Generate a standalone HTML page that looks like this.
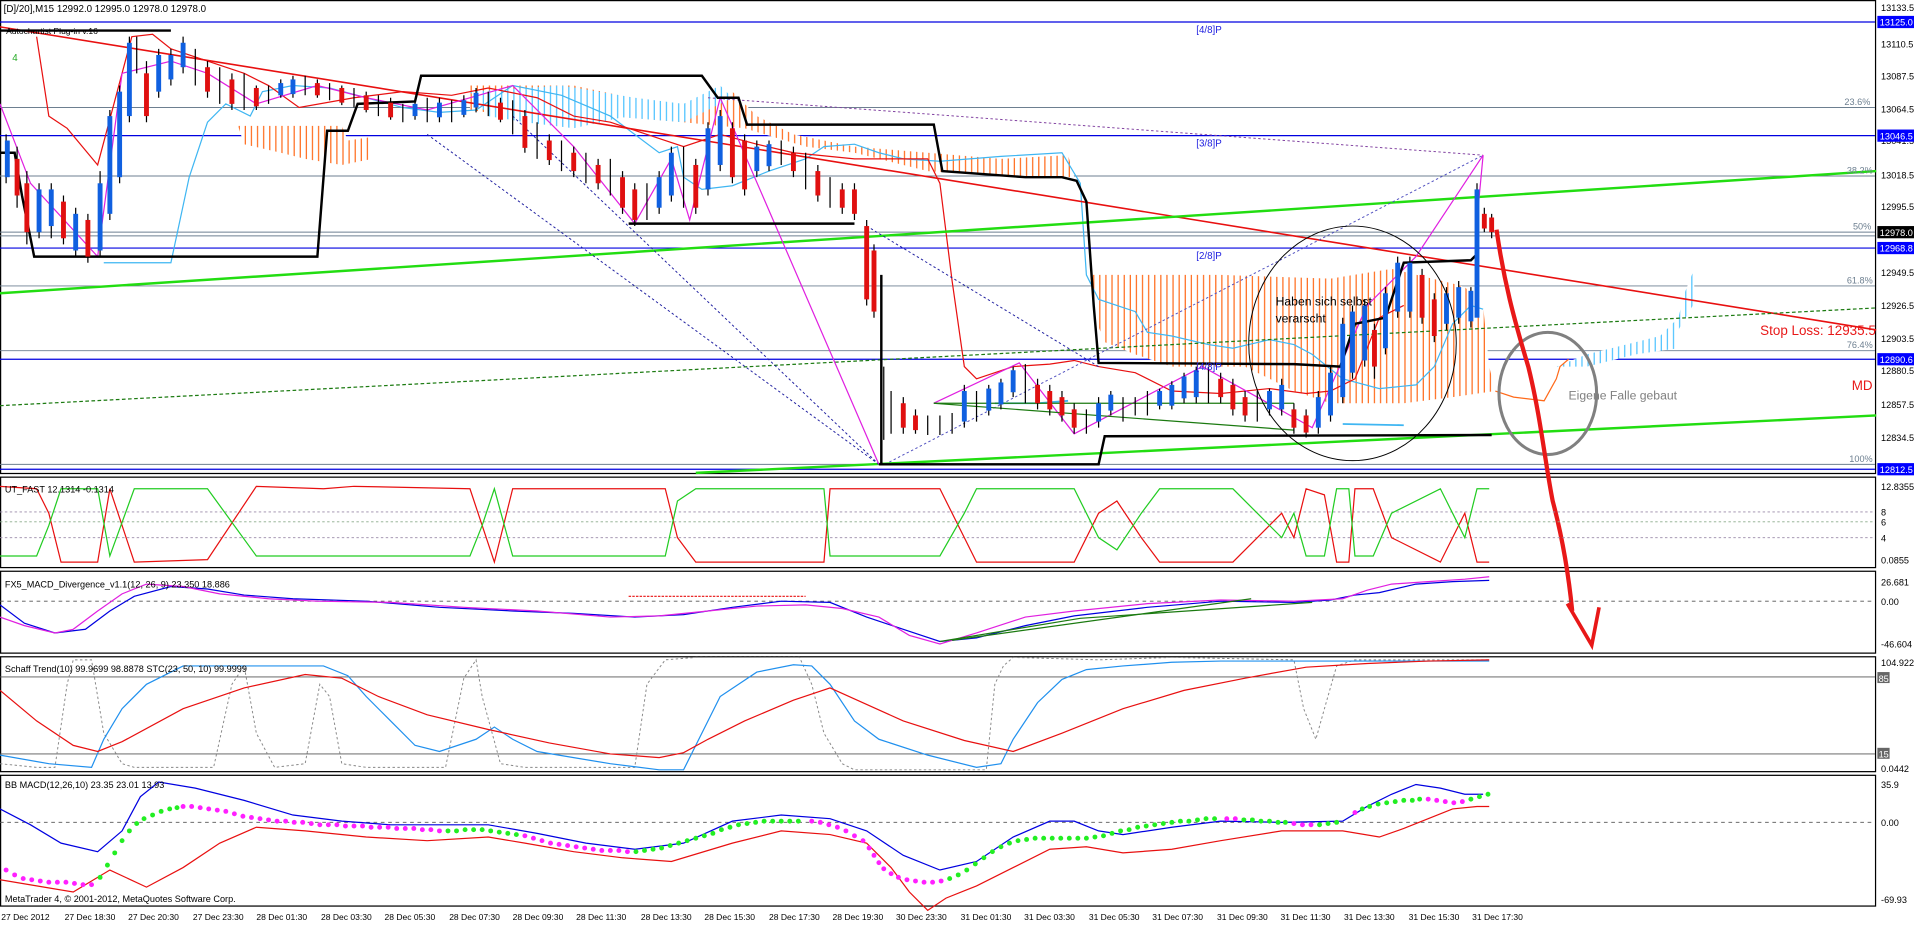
<!DOCTYPE html>
<html><head><meta charset="utf-8"><style>
html,body{margin:0;padding:0;background:#fff;overflow:hidden}
svg{display:block}
text{font-family:"Liberation Sans",sans-serif}
</style></head><body>
<svg width="1914" height="925" viewBox="0 0 1568 757" preserveAspectRatio="none" xmlns="http://www.w3.org/2000/svg">
<defs>
<pattern id="ho" width="5" height="10" patternUnits="userSpaceOnUse"><rect width="5" height="10" fill="#fff"/><line x1="1" y1="0" x2="1" y2="10" stroke="#ff6a1a" stroke-width="1"/></pattern>
<pattern id="hb" width="5" height="10" patternUnits="userSpaceOnUse"><rect width="5" height="10" fill="#fff"/><line x1="1" y1="0" x2="1" y2="10" stroke="#4cc2ff" stroke-width="1"/></pattern>
</defs>
<rect width="1568" height="757" fill="#fff"/>
<!-- panel borders -->
<g fill="none" stroke="#000" stroke-width="1">
<rect x="0.5" y="0.5" width="1536" height="387"/>
<rect x="0.5" y="390.5" width="1536" height="74"/>
<rect x="0.5" y="467.5" width="1536" height="67"/>
<rect x="0.5" y="537.5" width="1536" height="94"/>
<rect x="0.5" y="634.5" width="1536" height="107"/>
</g>
<!-- horizontal levels -->
<g stroke="#6d7f90" stroke-width="0.8">
<line x1="0" y1="88" x2="1536" y2="88"/><line x1="0" y1="144" x2="1536" y2="144"/>
<line x1="0" y1="190" x2="1536" y2="190"/><line x1="0" y1="193" x2="1536" y2="193"/><line x1="0" y1="234" x2="1536" y2="234"/>
<line x1="0" y1="287" x2="1536" y2="287"/><line x1="0" y1="380" x2="1536" y2="380"/>
</g>
<g stroke="#0000e0" stroke-width="1">
<line x1="0" y1="18" x2="1536" y2="18"/><line x1="0" y1="111" x2="1536" y2="111"/>
<line x1="0" y1="203" x2="1536" y2="203"/><line x1="0" y1="294" x2="1536" y2="294"/><line x1="0" y1="384" x2="1536" y2="384"/>
</g>
<!-- ichimoku clouds -->
<path d="M195,103 L280,103 L285,115 L305,112 L305,130 L280,135 L250,130 L230,125 L200,118Z" fill="url(#ho)"/>
<path d="M385,70 L470,70 L540,85 L580,90 L600,75 L620,95 L650,110 L700,120 L760,125 L820,130 L875,127 L880,145 L840,145 L760,140 L700,125 L660,120 L610,105 L560,100 L500,95 L450,102 L420,95 L385,90Z" fill="url(#ho)"/>
<path d="M385,75 L460,70 L520,80 L560,85 L590,70 L600,80 L560,100 L510,96 L470,105 L430,100 L400,95Z" fill="url(#hb)"/>
<path d="M895,225 L1000,225 L1090,228 L1140,220 L1190,232 L1200,235 L1215,250 L1220,300 L1225,320 L1190,325 L1150,330 L1120,330 L1090,330 L1060,320 L1020,300 L960,300 L930,290 L905,280 L897,260Z" fill="url(#ho)"/>
<path d="M1275,300 L1300,290 L1320,285 L1340,280 L1360,275 L1375,260 L1380,240 L1388,220 L1388,248 L1375,270 L1375,285 L1340,290 L1300,300Z" fill="url(#hb)"/>
<path d="M1225,320 L1240,325 L1265,328 L1275,310 L1278,300 L1285,294" fill="none" stroke="#ff6a1a"/>
<!-- lightblue kijun/chikou -->
<polyline fill="none" stroke="#3fb6f2" stroke-width="1" points="85,215 140,215 155,145 170,100 185,85 205,95 215,75 240,70 270,72 300,80 330,88 360,92 390,90 420,70 460,78 500,95 540,125 555,120 560,145 575,155 600,152 630,140 660,130 675,120 700,118 720,125 740,130 770,132 820,128 870,125 885,150 890,225 900,245 930,255 940,272 960,275 990,282 1010,285 1040,278 1060,282 1075,290 1100,310 1130,318 1160,315 1175,300 1190,265 1205,250 1215,253"/>
<polyline fill="none" stroke="#3fb6f2" stroke-width="1.5" points="815,330 850,330 875,328"/>
<polyline fill="none" stroke="#3fb6f2" stroke-width="1.5" points="1100,347 1150,348"/>
<!-- red psar/tenkan -->
<polyline fill="none" stroke="#e81010" stroke-width="1" points="30,30 40,95 55,105 80,135 100,60 108,30 125,28 140,40 170,50 200,60 220,70 245,88 290,80 330,75 370,78 400,72 440,80 470,95 500,100 530,110 560,120 590,110 620,118 650,125 700,130 760,130 770,150 780,230 790,300 800,310 830,300 860,298 880,295 900,300 930,305 960,320 1000,322 1040,318 1070,322 1090,320 1110,310 1130,260 1150,250"/>
<!-- big trend lines -->
<line x1="0" y1="22" x2="1537" y2="270" stroke="#e81010" stroke-width="1.3"/>
<line x1="0" y1="240" x2="1537" y2="140" stroke="#22dd11" stroke-width="2"/>
<line x1="0" y1="332" x2="1537" y2="252" stroke="#1b7a10" stroke-width="1" stroke-dasharray="3,2"/>
<line x1="570" y1="387" x2="1537" y2="340" stroke="#22dd11" stroke-width="2"/>
<line x1="725" y1="380" x2="1215" y2="127" stroke="#5050c0" stroke-width="0.8" stroke-dasharray="2,2"/>
<line x1="580" y1="80" x2="1215" y2="127" stroke="#8040a0" stroke-width="0.8" stroke-dasharray="2,2"/>
<line x1="350" y1="110" x2="720" y2="380" stroke="#2020a0" stroke-width="0.8" stroke-dasharray="2,2"/>
<line x1="420" y1="95" x2="720" y2="380" stroke="#2020a0" stroke-width="0.8" stroke-dasharray="2,2"/>
<line x1="710" y1="185" x2="900" y2="300" stroke="#2020a0" stroke-width="0.8" stroke-dasharray="2,2"/>
<polyline fill="none" stroke="#e020e0" stroke-width="1" points="0,85 25,150 80,210 100,60 140,50 170,60 210,85 260,70 300,80 350,90 420,70 470,120 520,183 550,130 565,180 590,80 720,380"/>
<polyline fill="none" stroke="#e020e0" stroke-width="1" points="765,330 835,297 880,355 985,300 1075,350 1120,250 1160,210 1215,127 1210,180"/>
<line x1="765" y1="330" x2="1060" y2="352" stroke="#1b7a10" stroke-width="1"/>
<line x1="765" y1="330" x2="1060" y2="330" stroke="#1b7a10" stroke-width="1"/>
<!-- black step lines -->
<polyline fill="none" stroke="#000" stroke-width="2" points="0,125 12,125 18,160 28,210 260,210 268,107 285,107 293,85 340,83 345,62 575,62 588,80 605,80 612,102 765,102 772,140 840,145 870,145 882,148 890,165 896,250 900,297 1060,298 1098,300 1110,265 1135,260 1150,215 1205,213 1210,208"/>
<polyline fill="none" stroke="#000" stroke-width="2" points="0,25 140,25"/>
<polyline fill="none" stroke="#000" stroke-width="2" points="515,183 700,183"/>
<polyline fill="none" stroke="#000" stroke-width="2" points="720,380 900,380 905,357 1222,356"/>
<line x1="722" y1="225" x2="722" y2="380" stroke="#000" stroke-width="2"/>
<!-- candles -->
<g id="candles" stroke-width="1">
<g stroke="#000">
<path d="M5,110V150M14,120V170M22,140V200M32,150V195M42,150V195M52,160V200M62,170V210M72,175V215M82,140V210M90,90V180M98,70V150M106,30V100M112,30V60M120,50V100M130,40V80M140,40V70M150,30V60M160,40V70M170,50V80M180,55V85M190,60V90M200,60V90M210,70V90M220,70V85M230,65V80M240,62V80M250,62V78M260,65V80M270,68V82M280,70V86M290,72V88M300,75V92M310,78V95M320,80V98M330,85V100M340,82V98M350,80V100M360,80V100M370,82V100M380,78V96M390,72V92M400,75V95M410,80V100M420,82V110M430,90V125M440,100V130M450,110V135M460,115V140M470,120V145M480,125V150M490,130V155M500,130V160M510,140V175M520,150V185M530,150V180M540,140V175M550,120V165M560,120V170M570,130V175M580,100V160M590,90V140M600,100V150M610,110V160M620,115V145M630,115V140M640,115V135M650,120V145M660,125V155M670,135V165M680,145V170M690,150V175M700,150V180M710,180V250M716,200V260M724,300V360M730,320V355M740,325V355M750,335V355M760,340V356M770,340V356M780,338V355M790,315V350M800,320V345M810,315V340M820,310V335M830,300V325M840,298V330M850,310V335M860,315V340M870,320V345M880,330V355M890,335V355M900,325V350M910,320V340M920,325V345M930,325V340M940,320V340M950,318V335M960,312V335M970,305V330M980,300V330M990,300V330M1000,305V330M1010,310V340M1020,320V345M1030,320V345M1040,318V340M1050,310V340M1060,330V355M1070,335V358M1080,320V355M1090,300V345M1100,260V330M1108,250V310M1118,245V300M1126,265V310M1135,235V290M1145,210V260M1155,210V260M1165,220V265M1175,240V280M1185,235V270M1195,230V265M1205,235V268M1210,150V210M1216,170V190M1222,175V195"/>
</g>
<g fill="#e01010" stroke="none">
<rect x="12" y="130" width="4" height="30"/><rect x="20" y="150" width="4" height="40"/><rect x="50" y="165" width="4" height="30"/><rect x="70" y="180" width="4" height="30"/><rect x="118" y="60" width="4" height="35"/><rect x="168" y="55" width="4" height="20"/><rect x="188" y="65" width="4" height="20"/><rect x="208" y="72" width="4" height="15"/><rect x="258" y="68" width="4" height="10"/><rect x="278" y="72" width="4" height="12"/><rect x="298" y="78" width="4" height="12"/><rect x="318" y="84" width="4" height="12"/><rect x="408" y="84" width="4" height="14"/><rect x="428" y="95" width="4" height="26"/><rect x="448" y="115" width="4" height="16"/><rect x="468" y="125" width="4" height="15"/><rect x="488" y="135" width="4" height="15"/><rect x="508" y="145" width="4" height="25"/><rect x="518" y="155" width="4" height="25"/><rect x="568" y="135" width="4" height="35"/><rect x="598" y="105" width="4" height="40"/><rect x="608" y="115" width="4" height="40"/><rect x="648" y="125" width="4" height="15"/><rect x="668" y="140" width="4" height="20"/><rect x="688" y="155" width="4" height="15"/><rect x="698" y="155" width="4" height="20"/><rect x="708" y="185" width="4" height="60"/><rect x="714" y="205" width="4" height="50"/><rect x="738" y="330" width="4" height="20"/><rect x="748" y="340" width="4" height="12"/><rect x="848" y="315" width="4" height="15"/><rect x="858" y="320" width="4" height="15"/><rect x="868" y="325" width="4" height="15"/><rect x="878" y="335" width="4" height="15"/><rect x="998" y="310" width="4" height="15"/><rect x="1008" y="315" width="4" height="20"/><rect x="1018" y="325" width="4" height="15"/><rect x="1058" y="335" width="4" height="15"/><rect x="1068" y="340" width="4" height="14"/><rect x="1124" y="270" width="4" height="30"/><rect x="1163" y="225" width="4" height="35"/><rect x="1173" y="245" width="4" height="30"/><rect x="1214" y="175" width="4" height="12"/><rect x="1220" y="178" width="4" height="12"/>
</g>
<g fill="#1060e0" stroke="none">
<rect x="4" y="115" width="4" height="30"/><rect x="30" y="155" width="4" height="35"/><rect x="40" y="155" width="4" height="30"/><rect x="60" y="175" width="4" height="30"/><rect x="80" y="150" width="4" height="55"/><rect x="88" y="95" width="4" height="80"/><rect x="96" y="75" width="4" height="70"/><rect x="104" y="35" width="4" height="60"/><rect x="128" y="45" width="4" height="30"/><rect x="138" y="45" width="4" height="20"/><rect x="148" y="35" width="4" height="20"/><rect x="228" y="68" width="4" height="10"/><rect x="238" y="65" width="4" height="12"/><rect x="338" y="85" width="4" height="10"/><rect x="358" y="84" width="4" height="12"/><rect x="378" y="82" width="4" height="12"/><rect x="388" y="76" width="4" height="12"/><rect x="538" y="145" width="4" height="25"/><rect x="548" y="125" width="4" height="35"/><rect x="578" y="105" width="4" height="50"/><rect x="588" y="95" width="4" height="40"/><rect x="618" y="120" width="4" height="20"/><rect x="628" y="118" width="4" height="18"/><rect x="788" y="320" width="4" height="25"/><rect x="808" y="318" width="4" height="18"/><rect x="818" y="313" width="4" height="18"/><rect x="828" y="303" width="4" height="18"/><rect x="898" y="330" width="4" height="15"/><rect x="908" y="323" width="4" height="13"/><rect x="948" y="320" width="4" height="12"/><rect x="958" y="315" width="4" height="17"/><rect x="968" y="308" width="4" height="18"/><rect x="978" y="303" width="4" height="22"/><rect x="1038" y="320" width="4" height="15"/><rect x="1048" y="315" width="4" height="20"/><rect x="1078" y="325" width="4" height="25"/><rect x="1088" y="305" width="4" height="35"/><rect x="1098" y="265" width="4" height="60"/><rect x="1106" y="255" width="4" height="50"/><rect x="1116" y="250" width="4" height="45"/><rect x="1133" y="240" width="4" height="45"/><rect x="1143" y="215" width="4" height="40"/><rect x="1153" y="215" width="4" height="40"/><rect x="1183" y="240" width="4" height="25"/><rect x="1193" y="235" width="4" height="25"/><rect x="1203" y="238" width="4" height="25"/><rect x="1208" y="155" width="4" height="105"/>
</g>
</g>
<!-- ellipses -->
<ellipse cx="1108" cy="281" rx="85" ry="96" fill="none" stroke="#000" stroke-width="0.8"/>
<ellipse cx="1268" cy="322" rx="40" ry="50" fill="none" stroke="#808080" stroke-width="2.5"/>
<!-- red arrow -->
<path d="M1226,188 C1232,230 1240,260 1252,300 C1262,340 1266,380 1272,410 C1280,440 1285,470 1288,500" fill="none" stroke="#e81818" stroke-width="3.5"/>
<path d="M1284,494 L1304,528 L1310,497" fill="none" stroke="#e81818" stroke-width="3"/>
<!-- main texts -->
<g font-size="8" fill="#000">
<text x="3" y="10">[D]/20],M15  12992.0 12995.0 12978.0 12978.0</text>
<text x="5" y="28" font-size="7">Autochartist Plug-in v.16</text>
<text x="10" y="50" fill="#22aa22">4</text>
<text x="980" y="27" fill="#2020e0">[4/8]P</text>
<text x="980" y="120" fill="#2020e0">[3/8]P</text>
<text x="980" y="212" fill="#2020e0">[2/8]P</text>
<text x="980" y="303" fill="#2020e0">[4/8]P</text>
<text x="1045" y="250" font-size="10">Haben sich selbst</text>
<text x="1045" y="264" font-size="10">verarscht</text>
<text x="1285" y="327" font-size="10" fill="#808080">Eigene Falle gebaut</text>
<text x="1442" y="274" font-size="11" fill="#e81818">Stop Loss: 12935.5</text>
<text x="1517" y="319" font-size="11" fill="#e81818">MD</text>
<g fill="#6d7f90" font-size="7.5">
<text x="1511" y="86">23.6%</text><text x="1513" y="142">38.2%</text><text x="1518" y="188">50%</text><text x="1513" y="232">61.8%</text><text x="1513" y="285">76.4%</text><text x="1515" y="378">100%</text>
</g>
</g>
<!-- right axis -->
<g font-size="7.5" fill="#000">
<text x="1541" y="9">13133.5</text><text x="1541" y="39">13110.5</text><text x="1541" y="65">13087.5</text><text x="1541" y="92">13064.5</text><text x="1541" y="118">13041.5</text><text x="1541" y="146">13018.5</text><text x="1541" y="172">12995.5</text><text x="1541" y="226">12949.5</text><text x="1541" y="253">12926.5</text><text x="1541" y="280">12903.5</text><text x="1541" y="306">12880.5</text><text x="1541" y="334">12857.5</text><text x="1541" y="361">12834.5</text>
</g>
<g font-size="7.5">
<rect x="1538" y="13" width="30" height="10" fill="#0000ff"/><text x="1540" y="21" fill="#fff">13125.0</text>
<rect x="1538" y="106" width="30" height="10" fill="#0000ff"/><text x="1540" y="114" fill="#fff">13046.5</text>
<rect x="1538" y="185" width="30" height="10" fill="#000"/><text x="1540" y="193" fill="#fff">12978.0</text>
<rect x="1538" y="198" width="30" height="10" fill="#0000ff"/><text x="1540" y="206" fill="#fff">12968.8</text>
<rect x="1538" y="289" width="30" height="10" fill="#0000ff"/><text x="1540" y="297" fill="#fff">12890.6</text>
<rect x="1538" y="379" width="30" height="10" fill="#0000ff"/><text x="1540" y="387" fill="#fff">12812.5</text>
</g>
<!-- UT_FAST panel -->
<g stroke-dasharray="2,2" stroke-width="0.7">
<line x1="0" y1="419" x2="1536" y2="419" stroke="#9a8aa8"/><line x1="0" y1="427" x2="1536" y2="427" stroke="#8aaa8a"/><line x1="0" y1="440" x2="1536" y2="440" stroke="#9a8aa8"/>
</g>
<polyline fill="none" stroke="#e81010" stroke-width="1" points="0,398 30,400 40,420 50,460 80,460 90,400 110,460 170,458 210,398 265,400 290,398 385,400 395,430 405,460 420,400 545,400 555,440 570,460 675,460 680,400 770,400 790,440 800,460 880,460 900,420 915,410 935,440 950,460 1010,460 1030,440 1050,420 1060,440 1070,400 1085,405 1095,460 1105,460 1110,400 1125,400 1140,440 1180,460 1190,440 1200,420 1210,460 1220,460"/>
<polyline fill="none" stroke="#22cc22" stroke-width="1" points="0,455 30,455 40,430 50,400 80,400 90,455 110,400 170,400 210,455 265,455 290,455 385,455 395,430 405,400 420,455 545,455 555,410 570,400 675,400 680,455 770,455 790,420 800,400 880,400 900,440 915,450 935,420 950,400 1010,400 1030,420 1050,440 1060,420 1070,455 1085,455 1095,400 1105,400 1110,455 1125,455 1140,420 1180,400 1190,420 1200,440 1210,400 1220,400"/>
<text x="4" y="403" font-size="7.5">UT_FAST 12.1314 -0.1314</text>
<g font-size="7.5"><text x="1541" y="401">12.8355</text><text x="1541" y="422">8</text><text x="1541" y="430">6</text><text x="1541" y="443">4</text><text x="1541" y="461">0.0855</text></g>
<!-- MACD divergence -->
<line x1="0" y1="492" x2="1536" y2="492" stroke="#555" stroke-dasharray="3,3" stroke-width="0.7"/>
<polyline fill="none" stroke="#0000e0" stroke-width="1" points="0,495 20,510 45,518 70,515 90,500 110,488 140,480 170,482 200,487 240,490 300,492 360,497 420,500 470,502 520,505 560,503 600,497 640,492 680,493 710,505 740,515 770,525 800,522 840,512 880,504 940,497 1000,492 1060,493 1090,491 1110,487 1130,485 1160,478 1190,476 1220,475"/>
<polyline fill="none" stroke="#e020e0" stroke-width="1" points="0,505 20,512 45,518 60,515 80,500 100,486 120,478 150,480 180,486 220,490 260,492 320,493 380,497 440,500 500,505 540,504 580,500 620,496 660,495 690,498 720,505 745,520 770,527 800,518 840,505 880,500 940,494 1000,491 1060,492 1100,490 1120,483 1140,478 1170,476 1200,474 1220,472"/>
<polyline fill="none" stroke="#1b7a10" stroke-width="1" points="770,525 885,506 1075,493"/>
<polyline fill="none" stroke="#1b7a10" stroke-width="1" points="780,524 1025,490"/>
<line x1="515" y1="488" x2="660" y2="488" stroke="#e81010" stroke-dasharray="2,1" stroke-width="1"/>
<text x="4" y="481" font-size="7.5">FX5_MACD_Divergence_v1.1(12, 26, 9) 23.350 18.886</text>
<g font-size="7.5"><text x="1541" y="479">26.681</text><text x="1541" y="495">0.00</text><text x="1541" y="530">-46.604</text></g>
<!-- Schaff -->
<line x1="0" y1="554" x2="1536" y2="554" stroke="#555" stroke-width="0.8"/><line x1="0" y1="617" x2="1536" y2="617" stroke="#555" stroke-width="0.8"/>
<polyline fill="none" stroke="#888" stroke-width="0.8" stroke-dasharray="2,2" points="0,625 30,628 45,628 55,560 60,540 75,540 85,600 100,625 110,628 175,628 190,560 200,545 210,600 225,628 250,625 262,560 270,570 280,625 300,628 365,628 380,555 390,540 395,570 410,625 430,628 520,628 530,560 545,540 570,538 655,538 665,560 675,600 690,625 700,630 808,630 815,560 822,545 830,538 900,540 960,538 1060,540 1068,580 1078,605 1085,580 1095,545 1110,540 1220,540"/>
<polyline fill="none" stroke="#2090ee" stroke-width="1" points="0,618 40,625 75,628 85,605 100,580 120,560 150,545 200,545 230,545 265,545 285,553 300,570 320,590 340,610 360,615 390,605 405,595 420,605 440,615 470,620 500,625 540,630 560,630 575,600 590,570 620,550 650,544 665,545 680,560 700,590 720,605 760,618 800,628 820,625 830,605 850,575 870,556 890,548 920,545 960,542 1000,541 1100,541 1220,541"/>
<polyline fill="none" stroke="#e81010" stroke-width="1" points="0,565 30,590 60,610 80,615 100,607 150,580 200,563 250,552 280,555 310,570 350,585 400,597 450,608 500,617 540,620 560,616 580,605 610,590 650,573 680,563 700,572 740,590 790,606 830,615 870,600 920,580 970,565 1020,555 1070,546 1120,543 1170,541 1220,540"/>
<text x="4" y="550" font-size="7.5">Schaff Trend(10) 99.9699 98.8878  STC(23, 50, 10) 99.9999</text>
<g font-size="7.5"><text x="1541" y="545">104.922</text><rect x="1538" y="550" width="10" height="9" fill="#666"/><text x="1539" y="558" fill="#fff">85</text><rect x="1538" y="612" width="10" height="9" fill="#666"/><text x="1539" y="620" fill="#fff">15</text><text x="1541" y="632">0.0442</text></g>
<!-- BB MACD -->
<line x1="0" y1="673" x2="1536" y2="673" stroke="#555" stroke-dasharray="3,3" stroke-width="0.7"/>
<polyline fill="none" stroke="#0000e0" stroke-width="1" points="0,662 25,675 50,690 80,697 100,680 115,652 130,640 160,645 200,655 240,667 280,672 320,675 360,675 400,675 440,682 480,690 520,695 560,690 600,672 640,667 680,670 710,680 740,700 770,712 800,705 830,685 860,672 880,672 900,680 920,683 960,677 1000,672 1050,673 1100,672 1120,660 1140,650 1160,642 1180,645 1200,650 1215,650"/>
<polyline fill="none" stroke="#e81010" stroke-width="1" points="0,720 30,725 60,730 90,712 120,726 150,710 180,690 210,677 250,680 300,685 350,688 400,685 430,690 470,697 510,702 550,705 600,690 640,680 680,683 710,690 730,710 745,730 760,745 775,735 800,725 830,710 860,695 890,693 920,698 960,695 1000,688 1050,680 1080,680 1100,680 1130,685 1150,678 1170,670 1190,662 1210,660 1220,660"/>
<g fill="#ff20ff"><circle cx="5" cy="712" r="2"/><circle cx="12" cy="716" r="2"/><circle cx="19" cy="719" r="2"/><circle cx="26" cy="720" r="2"/><circle cx="33" cy="721" r="2"/><circle cx="40" cy="722" r="2"/><circle cx="47" cy="722" r="2"/><circle cx="54" cy="722" r="2"/><circle cx="61" cy="723" r="2"/><circle cx="68" cy="724" r="2"/><circle cx="75" cy="724" r="2"/>
<circle cx="150" cy="660" r="2"/><circle cx="157" cy="660" r="2"/><circle cx="164" cy="661" r="2"/><circle cx="171" cy="662" r="2"/><circle cx="178" cy="663" r="2"/><circle cx="185" cy="664" r="2"/><circle cx="192" cy="666" r="2"/><circle cx="199" cy="668" r="2"/><circle cx="206" cy="669" r="2"/><circle cx="213" cy="670" r="2"/><circle cx="220" cy="671" r="2"/><circle cx="227" cy="672" r="2"/><circle cx="234" cy="672" r="2"/><circle cx="241" cy="673" r="2"/><circle cx="248" cy="673" r="2"/><circle cx="255" cy="674" r="2"/><circle cx="262" cy="675" r="2"/><circle cx="269" cy="675" r="2"/><circle cx="276" cy="675" r="2"/><circle cx="283" cy="676" r="2"/><circle cx="290" cy="676" r="2"/><circle cx="297" cy="676" r="2"/><circle cx="304" cy="677" r="2"/><circle cx="311" cy="677" r="2"/><circle cx="318" cy="677" r="2"/><circle cx="325" cy="678" r="2"/><circle cx="332" cy="678" r="2"/><circle cx="339" cy="678" r="2"/><circle cx="346" cy="679" r="2"/><circle cx="353" cy="679" r="2"/><circle cx="360" cy="680" r="2"/><circle cx="430" cy="684" r="2"/><circle cx="437" cy="686" r="2"/><circle cx="444" cy="688" r="2"/><circle cx="451" cy="690" r="2"/><circle cx="458" cy="691" r="2"/><circle cx="465" cy="692" r="2"/><circle cx="472" cy="693" r="2"/><circle cx="479" cy="694" r="2"/><circle cx="486" cy="695" r="2"/><circle cx="493" cy="696" r="2"/><circle cx="500" cy="696" r="2"/><circle cx="507" cy="696" r="2"/><circle cx="514" cy="697" r="2"/>
<circle cx="665" cy="672" r="2"/><circle cx="672" cy="673" r="2"/><circle cx="679" cy="675" r="2"/><circle cx="686" cy="677" r="2"/><circle cx="693" cy="680" r="2"/><circle cx="700" cy="684" r="2"/><circle cx="707" cy="688" r="2"/><circle cx="712" cy="694" r="2"/><circle cx="716" cy="700" r="2"/><circle cx="720" cy="706" r="2"/><circle cx="724" cy="711" r="2"/><circle cx="730" cy="715" r="2"/><circle cx="736" cy="718" r="2"/><circle cx="743" cy="720" r="2"/><circle cx="750" cy="721" r="2"/><circle cx="757" cy="722" r="2"/><circle cx="764" cy="722" r="2"/><circle cx="771" cy="721" r="2"/><circle cx="1005" cy="670" r="2"/><circle cx="1012" cy="670" r="2"/><circle cx="1060" cy="674" r="2"/><circle cx="1067" cy="675" r="2"/><circle cx="1074" cy="675" r="2"/><circle cx="1110" cy="665" r="2"/><circle cx="1170" cy="654" r="2"/><circle cx="1177" cy="655" r="2"/><circle cx="1184" cy="656" r="2"/><circle cx="1191" cy="657" r="2"/><circle cx="1198" cy="656" r="2"/></g>
<g fill="#22ee22"><circle cx="82" cy="718" r="2"/><circle cx="88" cy="708" r="2"/><circle cx="94" cy="698" r="2"/><circle cx="100" cy="688" r="2"/><circle cx="106" cy="680" r="2"/><circle cx="112" cy="674" r="2"/><circle cx="118" cy="670" r="2"/><circle cx="125" cy="667" r="2"/><circle cx="132" cy="664" r="2"/><circle cx="139" cy="662" r="2"/><circle cx="145" cy="661" r="2"/>
<circle cx="367" cy="680" r="2"/><circle cx="374" cy="680" r="2"/><circle cx="381" cy="679" r="2"/><circle cx="388" cy="679" r="2"/><circle cx="395" cy="679" r="2"/><circle cx="402" cy="680" r="2"/><circle cx="409" cy="681" r="2"/><circle cx="416" cy="682" r="2"/><circle cx="423" cy="683" r="2"/><circle cx="521" cy="697" r="2"/><circle cx="528" cy="696" r="2"/><circle cx="535" cy="695" r="2"/><circle cx="542" cy="694" r="2"/><circle cx="549" cy="692" r="2"/><circle cx="556" cy="690" r="2"/><circle cx="563" cy="688" r="2"/><circle cx="570" cy="686" r="2"/><circle cx="577" cy="684" r="2"/><circle cx="584" cy="682" r="2"/><circle cx="591" cy="679" r="2"/><circle cx="598" cy="677" r="2"/><circle cx="605" cy="675" r="2"/><circle cx="612" cy="674" r="2"/><circle cx="619" cy="673" r="2"/><circle cx="626" cy="672" r="2"/><circle cx="633" cy="672" r="2"/><circle cx="640" cy="672" r="2"/><circle cx="647" cy="672" r="2"/><circle cx="654" cy="672" r="2"/>
<circle cx="778" cy="719" r="2"/><circle cx="785" cy="716" r="2"/><circle cx="792" cy="712" r="2"/><circle cx="799" cy="707" r="2"/><circle cx="806" cy="702" r="2"/><circle cx="813" cy="697" r="2"/><circle cx="820" cy="693" r="2"/><circle cx="827" cy="690" r="2"/><circle cx="834" cy="688" r="2"/><circle cx="841" cy="687" r="2"/><circle cx="848" cy="686" r="2"/><circle cx="855" cy="686" r="2"/><circle cx="862" cy="686" r="2"/><circle cx="869" cy="686" r="2"/><circle cx="876" cy="686" r="2"/><circle cx="883" cy="686" r="2"/><circle cx="890" cy="686" r="2"/><circle cx="897" cy="685" r="2"/><circle cx="904" cy="684" r="2"/><circle cx="911" cy="682" r="2"/><circle cx="918" cy="680" r="2"/><circle cx="925" cy="679" r="2"/><circle cx="932" cy="677" r="2"/><circle cx="939" cy="676" r="2"/><circle cx="946" cy="675" r="2"/><circle cx="953" cy="674" r="2"/><circle cx="960" cy="673" r="2"/><circle cx="967" cy="672" r="2"/><circle cx="974" cy="672" r="2"/><circle cx="981" cy="671" r="2"/><circle cx="988" cy="670" r="2"/><circle cx="995" cy="670" r="2"/><circle cx="1019" cy="671" r="2"/><circle cx="1026" cy="671" r="2"/><circle cx="1033" cy="672" r="2"/><circle cx="1040" cy="672" r="2"/><circle cx="1047" cy="673" r="2"/><circle cx="1053" cy="673" r="2"/><circle cx="1081" cy="675" r="2"/><circle cx="1088" cy="674" r="2"/><circle cx="1095" cy="673" r="2"/><circle cx="1116" cy="662" r="2"/><circle cx="1122" cy="660" r="2"/><circle cx="1129" cy="658" r="2"/><circle cx="1136" cy="657" r="2"/><circle cx="1143" cy="656" r="2"/><circle cx="1150" cy="655" r="2"/><circle cx="1157" cy="655" r="2"/><circle cx="1163" cy="654" r="2"/><circle cx="1205" cy="654" r="2"/><circle cx="1212" cy="652" r="2"/><circle cx="1219" cy="650" r="2"/></g>
<text x="4" y="645" font-size="7.5">BB MACD(12,26,10) 23.35 23.01 13.93</text>
<text x="4" y="738" font-size="7.5">MetaTrader 4, © 2001-2012, MetaQuotes Software Corp.</text>
<g font-size="7.5"><text x="1541" y="645">35.9</text><text x="1541" y="676">0.00</text><text x="1541" y="739">-69.93</text></g>
<!-- time axis -->
<g font-size="7" fill="#000">
<text x="1" y="753">27 Dec 2012</text><text x="53" y="753">27 Dec 18:30</text><text x="105" y="753">27 Dec 20:30</text><text x="158" y="753">27 Dec 23:30</text><text x="210" y="753">28 Dec 01:30</text><text x="263" y="753">28 Dec 03:30</text><text x="315" y="753">28 Dec 05:30</text><text x="368" y="753">28 Dec 07:30</text><text x="420" y="753">28 Dec 09:30</text><text x="472" y="753">28 Dec 11:30</text><text x="525" y="753">28 Dec 13:30</text><text x="577" y="753">28 Dec 15:30</text><text x="630" y="753">28 Dec 17:30</text><text x="682" y="753">28 Dec 19:30</text><text x="734" y="753">30 Dec 23:30</text><text x="787" y="753">31 Dec 01:30</text><text x="839" y="753">31 Dec 03:30</text><text x="892" y="753">31 Dec 05:30</text><text x="944" y="753">31 Dec 07:30</text><text x="997" y="753">31 Dec 09:30</text><text x="1049" y="753">31 Dec 11:30</text><text x="1101" y="753">31 Dec 13:30</text><text x="1154" y="753">31 Dec 15:30</text><text x="1206" y="753">31 Dec 17:30</text>
</g>
</svg>
</body></html>
